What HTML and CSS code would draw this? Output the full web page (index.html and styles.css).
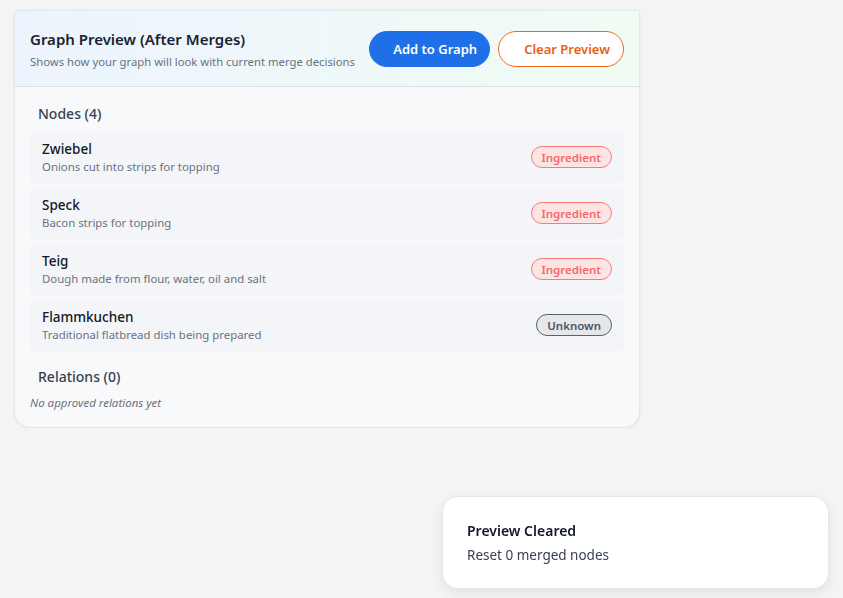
FILE: index.html
```html
<!DOCTYPE html>
<html lang="en">
<head>
<meta charset="utf-8">
<title>Graph Preview</title>
<link rel="stylesheet" href="styles.css">
</head>
<body>
<div class="card">
  <div class="card-header">
    <div class="header-text">
      <div class="title">Graph Preview (After Merges)</div>
      <div class="subtitle">Shows how your graph will look with current merge decisions</div>
    </div>
    <div class="actions">
      <button class="btn btn-primary">Add to Graph</button>
      <button class="btn btn-outline">Clear Preview</button>
    </div>
  </div>
  <div class="card-body">
    <div class="section-title">Nodes (4)</div>
    <div class="node-list">
      <div class="node">
        <div class="node-text">
          <div class="node-name">Zwiebel</div>
          <div class="node-desc">Onions cut into strips for topping</div>
        </div>
        <span class="badge badge-ingredient">Ingredient</span>
      </div>
      <div class="node">
        <div class="node-text">
          <div class="node-name">Speck</div>
          <div class="node-desc">Bacon strips for topping</div>
        </div>
        <span class="badge badge-ingredient">Ingredient</span>
      </div>
      <div class="node">
        <div class="node-text">
          <div class="node-name">Teig</div>
          <div class="node-desc">Dough made from flour, water, oil and salt</div>
        </div>
        <span class="badge badge-ingredient">Ingredient</span>
      </div>
      <div class="node">
        <div class="node-text">
          <div class="node-name">Flammkuchen</div>
          <div class="node-desc">Traditional flatbread dish being prepared</div>
        </div>
        <span class="badge badge-unknown">Unknown</span>
      </div>
    </div>
    <div class="section-title relations">Relations (0)</div>
    <div class="empty">No approved relations yet</div>
  </div>
</div>

<div class="toast">
  <div class="toast-title">Preview Cleared</div>
  <div class="toast-msg">Reset 0 merged nodes</div>
</div>
</body>
</html>
```

FILE: styles.css
```css
* { box-sizing: border-box; }

body {
  margin: 0;
  padding: 10px 0 0 14px;
  background: #f4f4f4;
  font-family: "Noto Sans", "Open Sans", sans-serif;
  color: #111827;
}

.card {
  width: 626px;
  background: #f8f9fa;
  border: 1px solid #e2e7ed;
  border-radius: 3px 3px 16px 16px;
  box-shadow: 0 1px 3px rgba(15, 23, 42, 0.06);
  overflow: hidden;
}

.card-header {
  display: flex;
  justify-content: space-between;
  align-items: center;
  padding: 17px 15px 16px 15px;
  background: linear-gradient(90deg, #edf4fd 0%, #eff8fa 50%, #effcf3 100%);
  border-bottom: 1px solid #dde2e8;
}

.title {
  font-size: 15px;
  line-height: 22px;
  font-weight: 600;
  color: #1a2233;
}

.subtitle {
  margin-top: 4px;
  font-size: 11.3px;
  line-height: 16px;
  color: #6b7280;
}

.actions {
  display: flex;
  gap: 8px;
}

.btn {
  height: 36px;
  border-radius: 18px;
  font-family: inherit;
  font-size: 13px;
  font-weight: 600;
  padding: 0 12px 0 23px;
  cursor: pointer;
}

.btn-primary {
  background: #1e6fe8;
  border: 1px solid #1e6fe8;
  color: #ffffff;
}

.btn-outline {
  padding: 0 13px 0 25px;
  background: #ffffff;
  border: 1px solid #ea6a1e;
  color: #e8610f;
}

.card-body {
  padding: 17px 15px 16px 15px;
}

.section-title {
  padding-left: 8px;
  font-size: 14px;
  line-height: 20px;
  font-weight: 500;
  color: #374151;
}

.node-list {
  margin-top: 7px;
  display: flex;
  flex-direction: column;
  gap: 4px;
}

.node {
  display: flex;
  justify-content: space-between;
  align-items: center;
  padding: 8px 12px;
  background: #f3f5f8;
  border-radius: 4px;
}

.node-name {
  font-size: 13.5px;
  line-height: 20px;
  font-weight: 500;
  color: #111827;
}

.node-desc {
  font-size: 11.4px;
  line-height: 16px;
  color: #6b7280;
}

.badge {
  display: inline-flex;
  align-items: center;
  height: 22px;
  padding: 0 10px;
  border-radius: 11px;
  font-size: 11.5px;
  font-weight: 600;
}

.badge-ingredient {
  background: #fde4e4;
  border: 1px solid #f77b7b;
  color: #f06a6a;
}

.badge-unknown {
  background: #e5e7eb;
  border: 1px solid #5b616b;
  color: #4b5563;
}

.relations {
  margin-top: 16px;
}

.empty {
  margin-top: 8px;
  font-size: 11.5px;
  line-height: 16px;
  font-style: italic;
  color: #6b7280;
}

.toast {
  position: fixed;
  right: 14px;
  bottom: 9px;
  width: 387px;
  padding: 24px 24px 23px 24px;
  background: #ffffff;
  border: 1px solid #e3e8ee;
  border-radius: 16px;
  box-shadow: 0 4px 12px rgba(15, 23, 42, 0.08);
}

.toast-title {
  font-size: 14px;
  line-height: 20px;
  font-weight: 600;
  color: #111827;
}

.toast-msg {
  margin-top: 4px;
  font-size: 13.5px;
  line-height: 20px;
  color: #374151;
}
```
